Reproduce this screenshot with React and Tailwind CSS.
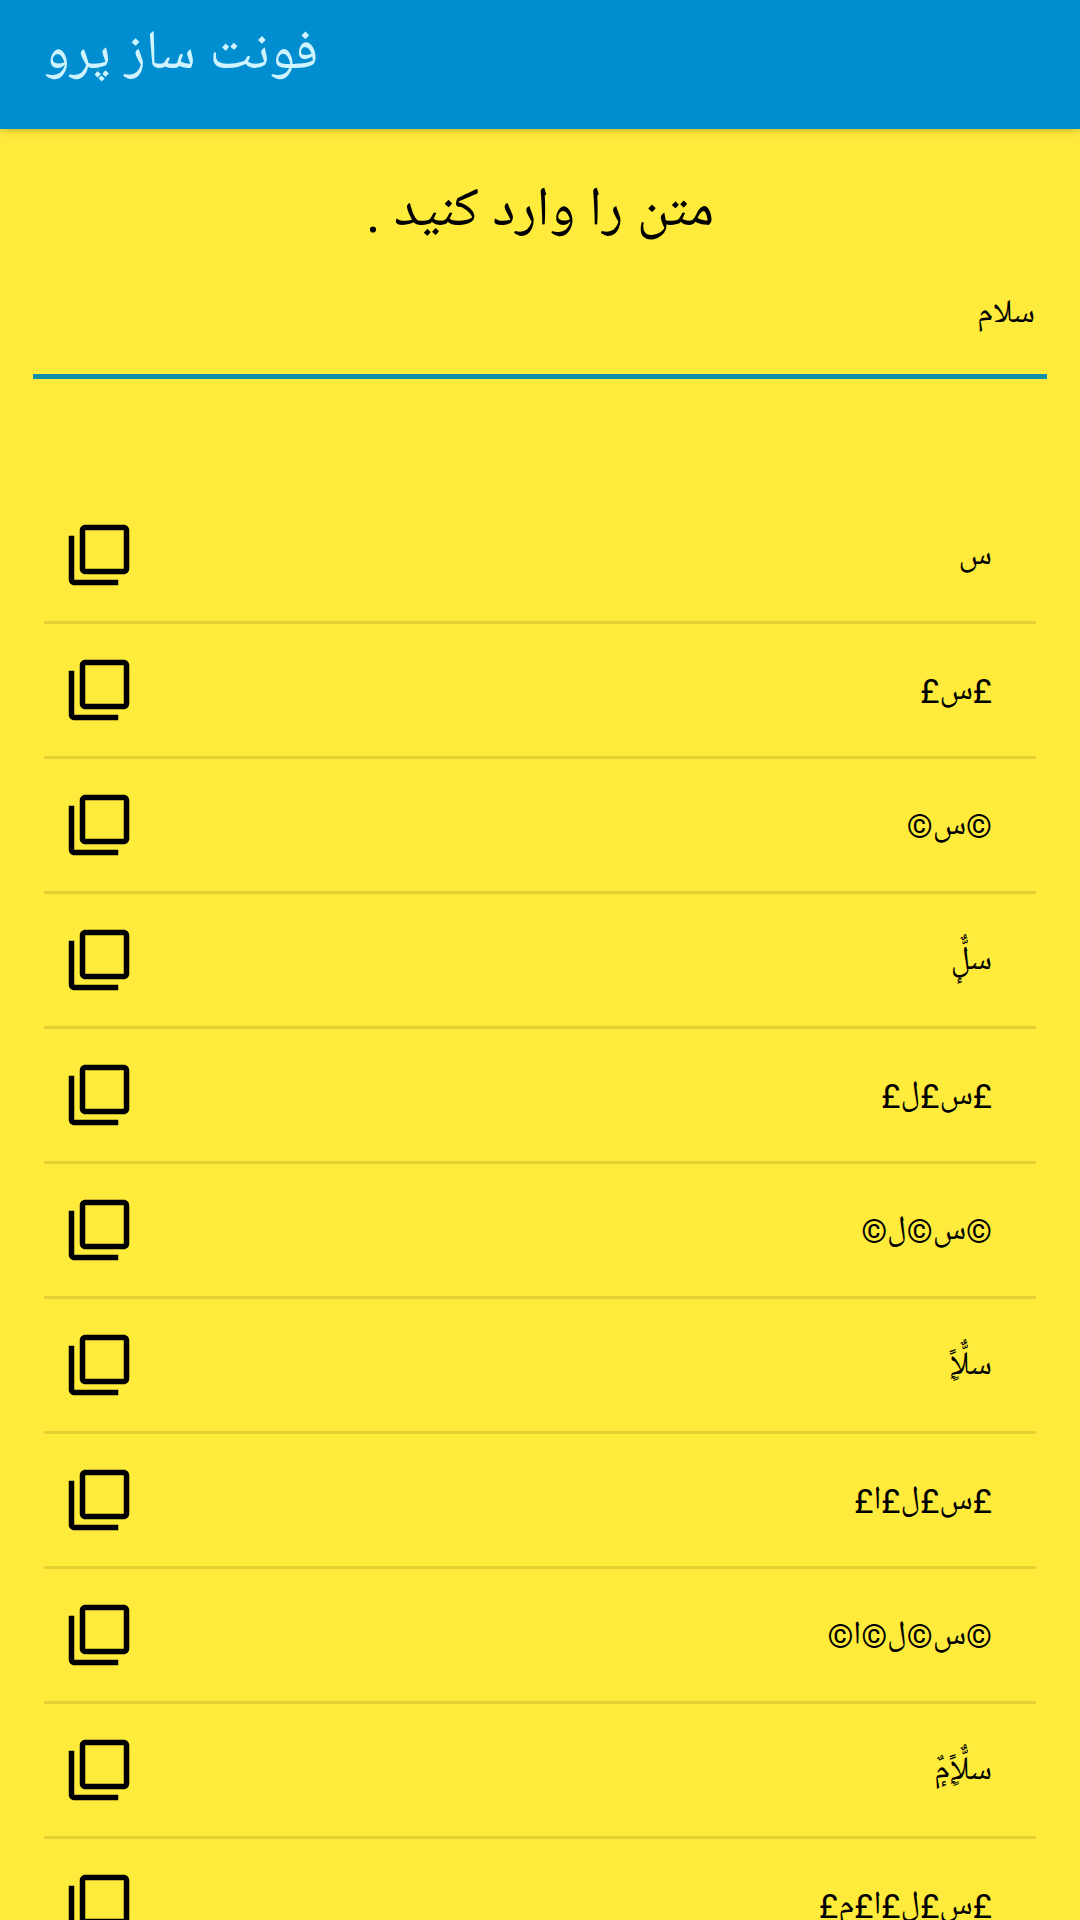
import React, { useState } from 'react';

const styles = [
  'س',
  '£س£',
  '©س©',
  'سل\u0651\u064c\u0655',
  '£س£ل£',
  '©س©ل©',
  'سل\u0651\u064c\u0655ا\u064b\u064d',
  '£س£ل£ا£',
  '©س©ل©ا©',
  'سل\u0651\u064c\u0655ا\u064b\u064dم\u064c\u0655',
  '£س£ل£ا£م£',
];

const CopyIcon = () => (
  <svg viewBox="0 0 24 24" className="h-[66px] w-[66px]" fill="currentColor" aria-hidden="true">
    <path d="M3 5H1v16c0 1.1.9 2 2 2h16v-2H3V5zm18-4H7c-1.1 0-2 .9-2 2v14c0 1.1.9 2 2 2h14c1.1 0 2-.9 2-2V3c0-1.1-.9-2-2-2zm0 16H7V3h14v14z" />
  </svg>
);

const StyleRow = ({ text }) => (
  <li className="flex h-[135px] items-center justify-between border-b-[3px] border-[#e3d032] pl-[22px] pr-11">
    <button type="button" aria-label="کپی">
      <CopyIcon />
    </button>
    <span dir="rtl" className="pt-1 text-[33px] leading-[48px]">{text}</span>
  </li>
);

const App = () => {
  const [value, setValue] = useState('سلام');

  return (
    <div className="h-screen overflow-hidden bg-[#ffeb3b] font-[Roboto,'Noto_Naskh_Arabic_UI','Noto_Naskh_Arabic',sans-serif] text-black">
      <header className="relative flex h-[129px] bg-[#008ed1] px-11 pt-4 shadow-[0_1px_8px_rgba(0,0,0,0.25)]">
        <h1 className="text-[55px] leading-[80px] text-[#d0f4ff]" dir="rtl">فونت ساز پرو</h1>
      </header>

      <main>
        <div className="px-[33px] pt-11">
          <label htmlFor="text" dir="rtl" className="block text-center text-[55px] leading-[80px]">
            متن را وارد کنید .
          </label>
          <input
            id="text"
            type="text"
            dir="rtl"
            value={value}
            onChange={(e) => setValue(e.target.value)}
            className="mt-4 block h-[110px] w-full border-b-[5px] border-[#1290a8] bg-transparent px-3 pb-4 text-[33px] outline-none"
          />
        </div>

        <ul className="mx-11 mt-[110px]">
          {styles.map((text) => (
            <StyleRow key={text} text={text} />
          ))}
        </ul>
      </main>
    </div>
  );
};

export default App;
